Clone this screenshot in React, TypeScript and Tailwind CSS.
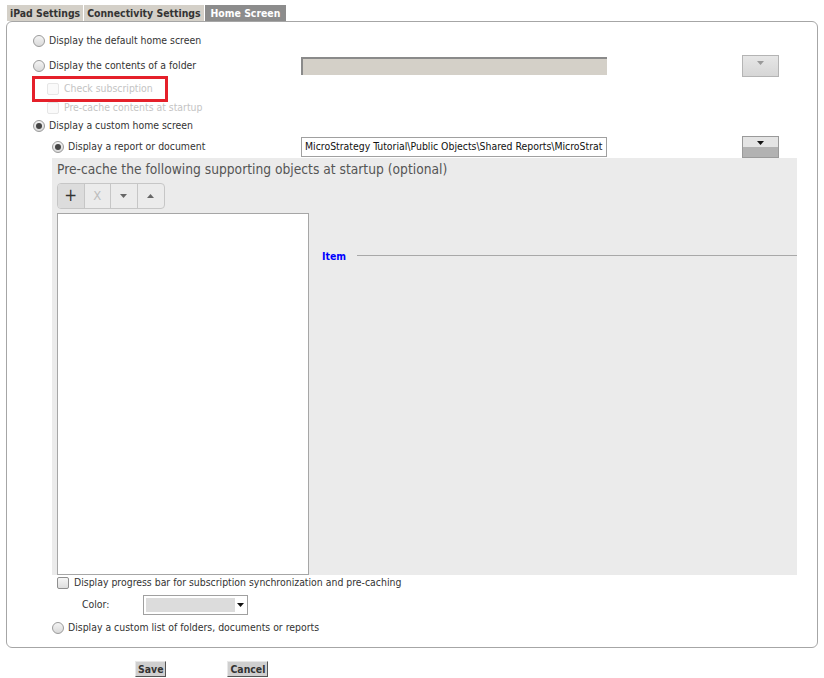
import type { ReactNode } from "react";

const font = { fontFamily: '"DejaVu Sans Condensed", "DejaVu Sans", sans-serif' };

const Radio = ({ checked }: { checked?: boolean }) => (
  <span className="flex h-[12px] w-[12px] shrink-0 items-center justify-center rounded-full border border-[#9a9a9a] bg-gradient-to-b from-[#f4f4f4] to-[#d9d9d9]">
    {checked && <span className="h-[6px] w-[6px] rounded-full bg-[#444]" />}
  </span>
);

const Check = ({ disabled }: { disabled?: boolean }) => (
  <span
    className={
      disabled
        ? "h-[12px] w-[12px] shrink-0 rounded-[2px] border border-[#e6e6e6] bg-[#fafafa]"
        : "h-[12px] w-[12px] shrink-0 rounded-[2px] border border-[#8f8f8f] bg-gradient-to-b from-[#f6f6f6] to-[#dedede]"
    }
  />
);

const Row = ({ children, className }: { children: ReactNode; className: string }) => (
  <div className={"flex items-center " + className}>{children}</div>
);

const Arrow = ({ color }: { color: string }) => (
  <svg width="7" height="4" viewBox="0 0 7 4">
    <path d="M0 0h7L3.5 4z" fill={color} />
  </svg>
);

export default function App() {
  return (
    <div className="relative h-[678px] w-[824px] bg-white text-[10.4px] text-[#333]" style={font}>
      {/* tabs */}
      <div className="flex pl-[7px] pt-[5px] font-bold">
        <div className="flex h-[16px] items-center border-r border-white bg-[#d4d0c8] px-[3px] pt-px text-[#333]">iPad Settings</div>
        <div className="flex h-[16px] items-center border-r border-white bg-[#d4d0c8] px-[3px] pt-px text-[#333]">Connectivity Settings</div>
        <div className="flex h-[16px] items-center bg-[#8c8c8c] px-[6px] pt-px text-white">Home Screen</div>
      </div>

      {/* panel */}
      <div className="ml-[6px] flex h-[627px] w-[812px] flex-col rounded-[6px] border border-[#a6a6a6]">
        <Row className="mt-[10px] h-[18px] gap-[4px] pl-[26px]">
          <Radio />
          <span>Display the default home screen</span>
        </Row>

        <div className="mt-[5px] flex h-[22px] items-center pl-[26px]">
          <div className="flex w-[268px] items-center gap-[4px]">
            <Radio />
            <span>Display the contents of a folder</span>
          </div>
          <div className="h-[18px] w-[306px] border-l-2 border-t-2 border-[#8a8a8a] bg-[#d4d0c8]" />
          <div className="ml-[135px] flex h-[22px] w-[37px] justify-center border border-[#b4b4b4] bg-gradient-to-b from-[#e6e6e6] to-[#d6d6d6] pt-[5px]">
            <Arrow color="#999" />
          </div>
        </div>

        <Row className="relative mt-[3px] h-[18px] gap-[5px] pl-[40px] text-[#c4c4c4]">
          <Check disabled />
          <span>Check subscription</span>
          <div className="absolute left-[25px] top-[-4px] h-[26px] w-[136px] border-[3px] border-[#e5202a]" />
        </Row>

        <Row className="mt-[1px] h-[18px] gap-[5px] pl-[40px] text-[#c4c4c4]">
          <Check disabled />
          <span>Pre-cache contents at startup</span>
        </Row>

        <Row className="h-[18px] gap-[4px] pl-[26px]">
          <Radio checked />
          <span>Display a custom home screen</span>
        </Row>

        <div className="mt-[1px] flex h-[22px] items-center pl-[45px]">
          <div className="flex w-[249px] items-center gap-[4px]">
            <Radio checked />
            <span>Display a report or document</span>
          </div>
          <div className="flex h-[20px] w-[306px] items-center overflow-hidden whitespace-nowrap border border-[#a0a0a0] bg-white pl-[3px] text-[#111]">
            MicroStrategy Tutorial\Public Objects\Shared Reports\MicroStrat
          </div>
          <div className="ml-[135px] flex h-[22px] w-[37px] flex-col border border-[#9a9a9a]">
            <div className="flex h-[10px] items-start justify-center bg-[#e4e4e4] pt-[4px]">
              <Arrow color="#111" />
            </div>
            <div className="flex-1 bg-[#b2b2b2]" />
          </div>
        </div>

        {/* supporting objects */}
        <div className="ml-[45px] flex h-[417px] w-[745px] flex-col bg-[#ebebeb] pl-[5px]">
          <div className="pt-[2px] text-[13.7px] leading-[18px] text-[#555]">
            Pre-cache the following supporting objects at startup (optional)
          </div>
          <div className="mt-[5px] flex h-[26px] w-[108px] overflow-hidden rounded-[4px] border border-[#c6c6c6]">
            <div className="flex w-[27px] items-center justify-center border-r border-[#c6c6c6] bg-[#dcdcdc] text-[17px] text-[#333]">+</div>
            <div className="flex w-[27px] items-center justify-center border-r border-[#c6c6c6] text-[13px] text-[#bdbdbd]">X</div>
            <div className="flex w-[27px] items-center justify-center border-r border-[#c6c6c6]">
              <Arrow color="#666" />
            </div>
            <div className="flex w-[27px] items-center justify-center">
              <svg width="7" height="4" viewBox="0 0 7 4">
                <path d="M0 4h7L3.5 0z" fill="#666" />
              </svg>
            </div>
          </div>
          <div className="mt-[4px] flex flex-1">
            <div className="h-[362px] w-[252px] border border-[#a6a6a6] bg-white" />
            <div className="flex flex-1 items-start pl-[13px] pt-[36px]">
              <span className="font-bold text-[#0000ff]">Item</span>
              <div className="ml-[11px] mt-[6px] h-px flex-1 bg-[#a8a8a8]" />
            </div>
          </div>
        </div>

        <Row className="h-[16px] gap-[5px] pl-[50px]">
          <Check />
          <span>Display progress bar for subscription synchronization and pre-caching</span>
        </Row>

        <div className="mt-[4px] flex h-[20px] items-center pl-[75px]">
          <span className="w-[61px]">Color:</span>
          <div className="flex h-[20px] w-[105px] items-center border border-[#a0a0a0] bg-white p-[2px]">
            <div className="h-full flex-1 bg-[#dcdcdc]" />
            <div className="flex w-[10px] justify-center">
              <Arrow color="#111" />
            </div>
          </div>
        </div>

        <Row className="mt-[4px] h-[18px] gap-[4px] pl-[45px]">
          <Radio />
          <span>Display a custom list of folders, documents or reports</span>
        </Row>
      </div>

      {/* buttons */}
      <div className="mt-[13px] flex gap-[61px] pl-[135px] font-bold">
        <button className="h-[16px] border border-b-[#555] border-l-[#e8e8e8] border-r-[#555] border-t-[#e8e8e8] bg-[#cfcfcf] px-[2px] leading-[13px] text-[#333]">
          Save
        </button>
        <button className="h-[16px] border border-b-[#555] border-l-[#e8e8e8] border-r-[#555] border-t-[#e8e8e8] bg-[#cfcfcf] px-[2px] leading-[13px] text-[#333]">
          Cancel
        </button>
      </div>
    </div>
  );
}
